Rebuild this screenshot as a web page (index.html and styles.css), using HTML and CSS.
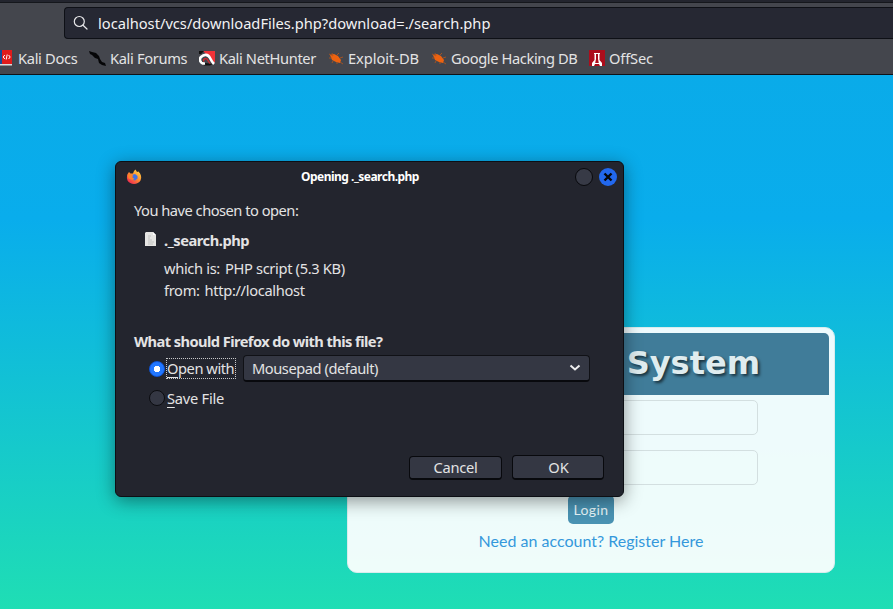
FILE: index.html
```html
<!DOCTYPE html>
<html lang="en">
<head>
<meta charset="utf-8">
<title>Opening ._search.php</title>
<link rel="stylesheet" href="styles.css">
</head>
<body>
<header class="chrome">
  <div class="address">
    <svg class="search" width="16" height="16" viewBox="0 0 16 16" fill="none" stroke="#e8e8ea" stroke-width="1.2" stroke-linecap="round"><circle cx="6.300" cy="6.500" r="5"/><path d="M10 10.300 14 14"/></svg>
    <span class="url">localhost/vcs/downloadFiles.php?download=./search.php</span>
  </div>
  <nav class="bookmarks">
    <a class="bm docs"><svg width="12" height="16" viewBox="0 0 12 16"><path fill="#174a94" d="M0 0h3v14H0z"/><path fill="#e01b1b" d="M2 0h10v14H2z"/><path fill="#ddd" d="M0 14h12v1.500H0z"/><path d="m4.800 5-1.600 2 1.600 2M8.600 5l1.600 2-1.600 2M7.200 4.500l-1 5" fill="none" stroke="#fff"/></svg><span>Kali Docs</span></a>
    <a class="bm forums"><svg width="17" height="17" viewBox="0 0 17 17"><path fill="#050507" d="m0 1 3 1 4 1 3 3 1 3 2 3 3 1 1 3-4-1-3-2-1-4-3-1-3-3-2-1z"/></svg><span>Kali Forums</span></a>
    <a class="bm hunter"><svg width="16" height="16" viewBox="0 0 16 16"><path fill="#f03238" d="M4 1h12v12z"/><path fill="#111" d="M0 1h5L2 4H0zM2 10l4 3 8 1-3 1.500H5z"/><path d="M6 13.500C1 14 0 9 2 7c3-3 7-3 9 1 1 2 2 4 4 6" fill="none" stroke="#fff" stroke-width="2.600"/><path d="M5 11.500c-2-3 3-4 4-1l2 3" fill="none" stroke="#d8252d" stroke-width="1.300"/></svg><span>Kali NetHunter</span></a>
    <a class="bm exploit"><svg width="16" height="16" viewBox="0 0 16 16"><g id="bug"><path fill="#ed6210" d="m2 5 4-1 4 2 3 4-1 3-4-1-4-2z"/><path d="m4 3 1 3-4-2M1 8h3m5-3 2-2M12 8l3-1M5 11l-1 2M9 12v2m3-2 3 2" fill="none" stroke="#b9551b" stroke-width=".8"/></g></svg><span>Exploit-DB</span></a>
    <a class="bm google"><svg width="16" height="16" viewBox="0 0 16 16"><use href="#bug"/></svg><span>Google Hacking DB</span></a>
    <a class="bm offsec"><svg width="16" height="16" viewBox="0 0 16 16"><path fill="#ac0d1c" d="M0 0h16v16H0z"/><path fill="#fff" d="M5 3h6v1h-.5v6l2.500 3v3h-2l-1-2H6l-1 2H3v-3l2.500-3V4H5z"/><path fill="#ac0d1c" d="M7 4h2v5l.8 4H6.200L7 9z"/></svg><span>OffSec</span></a>
  </nav>
</header>
<main class="page">
  <section class="card">
    <h1>System</h1>
    <form>
      <input type="text" aria-label="User">
      <input type="password" aria-label="Password">
      <button type="button" class="login">Login</button>
      <a class="register">Need an account? Register Here</a>
    </form>
  </section>
</main>
<section class="dialog" role="dialog">
  <div class="titlebar">
    <svg class="fox" width="16" height="16" viewBox="0 0 16 16"><defs><linearGradient id="fire" x1="1" y1="0" x2=".2" y2="1"><stop stop-color="#ffe14b"/><stop offset=".5" stop-color="#ff9130"/><stop offset="1" stop-color="#ef2553"/></linearGradient></defs><path fill="url(#fire)" d="M3 3 4.500 4.500 7 4.500l1-2.500 1.500-1.500L11 3l1.500-.5C15 5 16 8 14.500 11.500 12 16 4 16 1.500 11.500 .3 8 1 5 3 3z"/><path fill="#3f72e8" d="m6 6 3-1 2.500 2v2.500L9 11.500l-3-1z"/><path fill="#ff8228" d="M1.500 5.500 5 5l2.500 2-1.500 1 2.500 2-2 1-4-1.500z"/></svg>
    <strong class="title">Opening ._search.php</strong>
    <span class="max"></span>
    <span class="close"><svg width="18" height="18" viewBox="0 0 18 18"><path d="m5.500 5.500 7 7m0-7-7 7" stroke="#05070c" stroke-width="2.400"/></svg></span>
  </div>
  <div class="content">
    <p class="chosen">You have chosen to open:</p>
    <div class="file"><svg width="12" height="14" viewBox="0 0 12 14"><path fill="#e5e5e3" d="M1 0h7l3 3v11H0V1z"/><path fill="#fff" d="M8 0v3h3z"/><path d="M3 4h3M3 6h2M3 8h4M3 10h6M3 12h5" stroke="#b9bab8" stroke-width=".8"/></svg><strong>._search.php</strong></div>
    <p class="meta"><span>which is:</span><span class="type">PHP script (5.3 KB)</span></p>
    <p class="meta"><span>from:</span><span class="host">http://localhost</span></p>
    <p class="question"><strong>What should Firefox do with this file?</strong></p>
    <div class="choice"><span class="radio on"></span><span class="focus"><u>O</u>pen with</span>
      <div class="select"><span>Mousepad (default)</span><svg width="12" height="8" viewBox="0 0 12 8"><path d="m1.500 1.500 4.500 4 4.500-4" fill="none" stroke="#eeeeef" stroke-width="2"/></svg></div>
    </div>
    <div class="choice save"><span class="radio"></span><span class="savetext"><u>S</u>ave File</span></div>
    <div class="actions"><button type="button" class="cancel">Cancel</button><button type="button" class="ok">OK</button></div>
  </div>
</section>
</body>
</html>
```
FILE: styles.css
```css
* { box-sizing: border-box; }
body { margin: 0; height: 609px; overflow: hidden; display: flex; flex-direction: column; font: 14.67px/20px "Noto Sans", sans-serif; color: #e3e3e4; }
p { margin: 0; }
svg { display: block; flex: none; }
.chrome { height: 75px; flex: none; background: #44464d; border-top: 2px solid #23252e; border-bottom: 1px solid #101217; padding-top: 5px; box-shadow: inset 0 1px #15171c; }
.address { height: 32px; margin-left: 64px; display: flex; align-items: center; background: #262833; border: 1px solid #0e1016; border-right: 0; border-radius: 4px 0 0 4px; padding-left: 8px; gap: 9px; color: #f2f2f3; }
.url, .bm span { white-space: nowrap; }
.bookmarks { display: flex; height: 35px; align-items: center; padding-top: 3px; overflow: hidden; }
.bm { display: flex; align-items: center; flex: none; }
.bm svg { margin-right: 6px; }
.docs { width: 89px; letter-spacing: -.33px; }
.forums { width: 110px; letter-spacing: -.34px; }
.forums svg { margin-right: 4px; }
.hunter { width: 129px; letter-spacing: -.36px; }
.hunter svg, .offsec svg, .exploit svg { margin-right: 4px; }
.exploit { width: 103px; letter-spacing: -.05px; }
.google { width: 158px; letter-spacing: -.39px; }
.google svg { margin-right: 4px; }
.offsec { letter-spacing: -.15px; }
.page { flex: 1; padding: 252px 58px 0 347px; background: linear-gradient(#0aabe9, #09adec 27%, #1fdeb4); }
.card { width: 488px; height: 246px; padding: 5px; border: 1px solid #d9eced; border-radius: 10px; background: rgba(255,255,255,.93); }
h1 { margin: 0; height: 62px; padding-right: 69px; text-align: right; font: bold 32px/60px "DejaVu Sans", sans-serif; color: #dfecef; text-shadow: 2px 2px 3px rgba(0,0,0,.6); background: #407c99; border-radius: 0 5px 0 0; }
form { padding-top: 5px; display: flex; flex-direction: column; align-items: center; font-family: Lato, sans-serif; }
input { width: 334px; height: 35px; margin-bottom: 15px; border: 1px solid #d3dfe0; border-radius: 5px; background: transparent; }
.login { width: 46px; height: 29px; margin-top: -5px; padding: 0; border: 0; border-radius: 5px; background: #4992b2; color: #e4f2f6; font: 14px Lato, sans-serif; letter-spacing: .4px; }
.register { margin-top: 7px; color: #3498db; font-size: 16px; white-space: nowrap; }
.dialog { position: absolute; left: 115px; top: 161px; width: 509px; height: 336px; background: #23252e; border: 1px solid #0d0f14; border-radius: 6px; box-shadow: 0 4px 18px rgba(0,0,0,.42); }
.titlebar { height: 30px; display: flex; align-items: center; padding: 0 6px 0 10px; }
.title { flex: 1; padding-left: 9px; text-align: center; font-size: 12px; color: #fff; letter-spacing: -.52px; }
.max, .close { width: 18px; height: 18px; border-radius: 50%; margin-left: 6px; }
.max { background: #373a46; border: 1px solid #08090d; }
.close { background: #2268ee; }
.content { padding: 8px 19px 0 18px; white-space: nowrap; letter-spacing: -.45px; }
.chosen { letter-spacing: -.5px; }
.file { display: flex; height: 20px; margin-top: 10px; padding-left: 11px; gap: 7px; }
.file svg { margin-top: 2px; }
.meta { display: flex; height: 22px; padding-left: 30px; gap: 5px; letter-spacing: -.34px; }
.file + .meta { margin-top: 8px; }
.question { margin-top: 29px; letter-spacing: -.58px; }
.choice { display: flex; align-items: center; height: 27px; padding-left: 15px; margin-top: 4px; }
.radio { width: 16px; height: 16px; margin-right: 1px; border-radius: 50%; border: 1px solid #0b0c10; background: #343743; }
.radio.on { border-color: #0d55db; background: radial-gradient(circle, #fff 0 3px, #2277ff 3.5px); }
.focus { width: 70px; height: 21px; border: 1px dotted #c9cacc; line-height: 19px; }
u { text-underline-offset: 3px; }
.select { width: 347px; height: 27px; margin-left: 7px; display: flex; align-items: center; justify-content: space-between; padding: 0 8px; background: #343743; border: 1px solid #101116; border-bottom: 2px solid #08090d; border-radius: 4px; }
.save { height: 20px; margin-top: 6px; letter-spacing: -.25px; }
.savetext { padding-left: 1px; }
.actions { display: flex; justify-content: flex-end; align-items: flex-end; gap: 10px; height: 25px; margin-top: 47px; }
.actions button { height: 24px; padding: 0; font: 14.67px/20px "Noto Sans", sans-serif; letter-spacing: -.3px; color: #e3e3e4; background: #343743; border: 1px solid #08090d; border-bottom-width: 2px; border-radius: 4px; }
.actions .cancel { width: 93px; padding-bottom: 1px; line-height: 19px; }
.actions .ok { width: 92px; height: 25px; padding-left: 1px; letter-spacing: 0; }
```
